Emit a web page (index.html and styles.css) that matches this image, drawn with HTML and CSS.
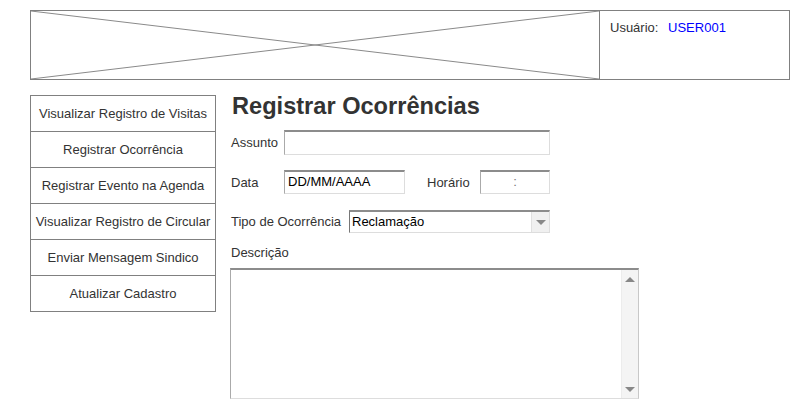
FILE: index.html
```html
<!DOCTYPE html>
<html lang="pt">
<head>
<meta charset="utf-8">
<title>Registrar Ocorrências</title>
<link rel="stylesheet" href="styles.css">
</head>
<body>
<div class="page">
  <header class="header">
    <div class="logo">
      <svg class="logo-x" viewBox="0 0 568 68" preserveAspectRatio="none">
        <line x1="0" y1="0" x2="568" y2="68"/>
        <line x1="0" y1="68" x2="568" y2="0"/>
      </svg>
    </div>
    <div class="user">
      <span class="user-label">Usuário:</span>
      <span class="user-name">USER001</span>
    </div>
  </header>
  <div class="body">
    <nav class="menu">
      <div class="menu-item">Visualizar Registro de Visitas</div>
      <div class="menu-item">Registrar Ocorrência</div>
      <div class="menu-item">Registrar Evento na Agenda</div>
      <div class="menu-item">Visualizar Registro de Circular</div>
      <div class="menu-item">Enviar Mensagem Sindico</div>
      <div class="menu-item">Atualizar Cadastro</div>
    </nav>
    <main class="main">
      <h1 class="title">Registrar Ocorrências</h1>
      <div class="row row-assunto">
        <span class="label label-assunto">Assunto</span>
        <div class="field field-assunto"></div>
      </div>
      <div class="row row-data">
        <span class="label label-data">Data</span>
        <div class="field field-data">DD/MM/AAAA</div>
        <span class="label label-horario">Horário</span>
        <div class="field field-horario">:</div>
      </div>
      <div class="row row-tipo">
        <span class="label label-tipo">Tipo de Ocorrência</span>
        <div class="field select">
          <span class="select-value">Reclamação</span>
          <span class="select-btn"><span class="arrow-down"></span></span>
        </div>
      </div>
      <div class="label label-desc">Descrição</div>
      <div class="textarea">
        <div class="ta-body"></div>
        <div class="scrollbar">
          <span class="arrow-up"></span>
          <span class="arrow-down"></span>
        </div>
      </div>
    </main>
  </div>
</div>
</body>
</html>
```

FILE: styles.css
```css
* { box-sizing: border-box; }
html, body { margin: 0; padding: 0; background: #fff; }
body {
  font-family: "Liberation Sans", Arial, sans-serif;
  font-size: 13px;
  color: #333;
}
.page { padding: 10px 0 0 30px; }

.header {
  display: flex;
  width: 760px;
  height: 70px;
  border: 1px solid #808080;
}
.logo { width: 569px; border-right: 1px solid #808080; }
.logo-x { display: block; width: 568px; height: 68px; }
.logo-x line { stroke: #8a8a8a; stroke-width: 1; vector-effect: non-scaling-stroke; }
.user { flex: 1; padding: 9px 0 0 10px; line-height: 16px; }
.user-name { color: #0000ff; margin-left: 6px; }

.body { display: flex; margin-top: 15px; }
.menu {
  width: 186px;
  border: 1px solid #808080;
  align-self: flex-start;
}
.menu-item {
  height: 36px;
  display: flex;
  align-items: center;
  justify-content: center;
  border-top: 1px solid #808080;
  white-space: nowrap;
}
.menu-item:first-child { height: 35px; border-top: none; }

.main { margin-left: 14px; width: 420px; }
.title {
  margin: 0;
  font-size: 23.6px;
  font-weight: bold;
  line-height: 22px;
  color: #333;
  padding-left: 2px;
  white-space: nowrap;
}

.row { display: flex; align-items: center; }
.label { line-height: 15px; }
.row-assunto { margin-top: 13px; padding-left: 1px; }
.label-assunto { width: 53px; }
.row-data { margin-top: 15px; padding-left: 1px; }
.label-data { width: 53px; }
.label-horario { margin-left: 22px; width: 53px; }
.row-tipo { margin-top: 16px; padding-left: 1px; }
.label-tipo { width: 118px; }

.field {
  height: 24px;
  border: 1px solid #c8c8c8;
  border-top: 2px solid #8c8c8c;
  border-left-color: #aaa;
  border-bottom-color: #ddd;
  border-right-color: #ddd;
  background: #fff;
  color: #000;
  line-height: 20px;
  padding: 0 3px;
}
.field-assunto { width: 266px; height: 25px; }
.field-data { width: 121px; }
.field-horario { width: 70px; text-align: center; color: #777; }

.select {
  width: 201px;
  height: 23px;
  display: flex;
  padding: 0 0 0 2px;
  border-left-color: #777;
}
.select-value { flex: 1; line-height: 20px; }
.select-btn {
  width: 18px;
  background: #f0f0f0;
  border-left: 1px solid #e0e0e0;
  display: flex;
  align-items: center;
  justify-content: center;
}
.arrow-down {
  width: 0; height: 0;
  border-left: 5px solid transparent;
  border-right: 5px solid transparent;
  border-top: 5px solid #888;
}
.arrow-up {
  width: 0; height: 0;
  border-left: 5px solid transparent;
  border-right: 5px solid transparent;
  border-bottom: 5px solid #888;
}

.label-desc { margin-top: 12px; padding-left: 1px; }
.textarea {
  margin-top: 8px;
  width: 409px;
  height: 131px;
  display: flex;
  border: 1px solid #c8c8c8;
  border-top: 2px solid #8c8c8c;
  border-left-color: #aaa;
  border-bottom-color: #ddd;
}
.ta-body { flex: 1; }
.scrollbar {
  width: 17px;
  background: #f4f4f4;
  border-left: 1px solid #ececec;
  display: flex;
  flex-direction: column;
  align-items: center;
  justify-content: space-between;
  padding: 7px 0 6px;
}
```
